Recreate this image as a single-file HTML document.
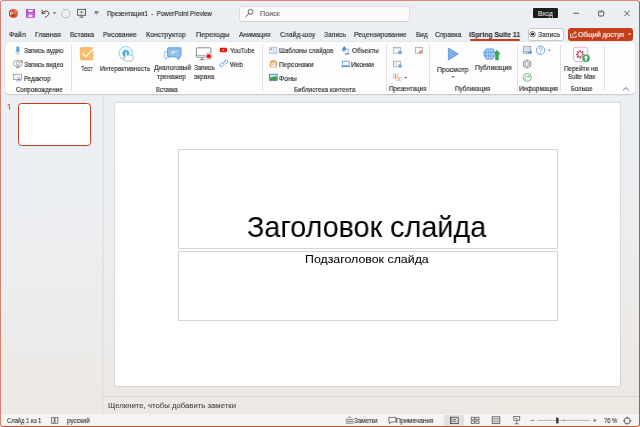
<!DOCTYPE html>
<html><head><meta charset="utf-8">
<style>
*{margin:0;padding:0;box-sizing:border-box}
html,body{width:640px;height:427px;overflow:hidden;background:#fff}
body{font-family:"Liberation Sans",sans-serif;color:#242424;position:relative}
.win{position:absolute;left:0;top:0;width:640px;height:427px;border-radius:3px;overflow:hidden;
 background:linear-gradient(175deg,#ebeef3 0%,#ebeef2 35%,#ecedee 60%,#ede8e3 90%,#eee7e2 100%)}
.abs{position:absolute}
svg{position:absolute;overflow:visible}
.t{position:absolute;white-space:pre;line-height:1;transform-origin:0 0;-webkit-text-stroke:0.12px currentColor;will-change:transform}
.ribbon{position:absolute;left:4.8px;top:41.9px;width:630px;height:51.8px;background:#fdfdfd;border-radius:4px;box-shadow:0 0.8px 1.2px rgba(0,0,0,.17)}
.sep{position:absolute;width:1px;background:#e0e0e0;top:45px;height:46px}
.slide{position:absolute;left:115px;top:103px;width:504.5px;height:283px;background:#fff;border-radius:1.5px;box-shadow:0 0 1.2px 0.6px rgba(0,0,0,.09)}
.ph{position:absolute;border:1px solid #d6d6d6}
</style></head><body>
<div class="win">
 <!-- title bar -->
 <div class="abs" style="left:239px;top:5.5px;width:171px;height:16px;background:#fafafa;border:1px solid #dedfe2;border-bottom-color:#cfd0d3;border-radius:3.5px"></div>
 <div class="abs" style="left:533px;top:8px;width:25px;height:10px;background:#1c1c1c;border-radius:1px"></div>

 <!-- Запись button -->
 <div class="abs" style="left:527.5px;top:27.5px;width:36px;height:13px;background:#fff;border:1px solid #c8c8c8;border-radius:3px"></div>
 <!-- share button -->
 <div class="abs" style="left:568px;top:27.5px;width:65px;height:13px;background:#c43e1c;border-radius:3px"></div>
 <div class="abs" style="left:470px;top:39px;width:50px;height:1.5px;background:#c43e1c;border-radius:1px"></div>

 <div class="ribbon"></div>
 <div class="sep" style="left:71px"></div>
 <div class="sep" style="left:262px"></div>
 <div class="sep" style="left:386px"></div>
 <div class="sep" style="left:429px"></div>
 <div class="sep" style="left:517px"></div>
 <div class="sep" style="left:559.5px"></div>
 <div class="sep" style="left:603.5px"></div>

 <!-- left panel -->
 <div class="abs" style="left:17.6px;top:102.9px;width:73.2px;height:42.9px;border:1.8px solid #be3f1d;border-radius:3.6px;background:#fff"></div>
 <div class="abs" style="left:101.5px;top:95px;width:2px;height:318px;background:#e2e3e5"></div>

 <div class="slide"></div>
 <div class="ph" style="left:177.5px;top:149px;width:380px;height:100px"></div>
 <div class="ph" style="left:177.5px;top:251px;width:380px;height:70px"></div>

 <div class="abs" style="left:103px;top:396px;width:536px;height:1px;background:#dcdad7"></div>

 <!-- status bar -->
 <div class="abs" style="left:0;top:413.5px;width:640px;height:14px;background:#f4f4f3"></div>
 <div class="abs" style="left:443.6px;top:415px;width:20.3px;height:10.6px;background:#e0e0e0;border-radius:1px"></div>


 <!-- ===== title bar icons ===== -->
 <svg style="left:0;top:0" width="640" height="427" viewBox="0 0 640 427">
  <!-- ppt logo -->
  <circle cx="13.5" cy="13.5" r="4.5" fill="#d5532f"/>
  <path d="M13.5 9 A4.5 4.5 0 0 1 18 13.5 L13.5 13.5Z" fill="#ed7a50"/>
  <rect x="9.3" y="10.8" width="4.6" height="5.4" rx="0.6" fill="#b7371a"/>
  <path d="M10.6 15.2 V12 H12.1 A1 1 0 0 1 12.1 14 H10.6" fill="none" stroke="#fff" stroke-width="0.8"/>
  <!-- save -->
  <rect x="26" y="9" width="9" height="8.8" rx="0.8" fill="#b54fc4"/>
  <rect x="28.2" y="9.8" width="4.5" height="2" fill="#fff"/>
  <rect x="28.6" y="14.6" width="3.8" height="2.3" fill="#fff"/>
  <path d="M27.2 13.3 H33.8 M27.2 14.1 V16.8 M33.8 14.1 V16.8" stroke="#dba8e3" stroke-width="0.5" fill="none"/>
  <!-- undo -->
  <path d="M42.2 10.4 L42 13.4 L45 13.2" fill="none" stroke="#424242" stroke-width="1" stroke-linejoin="round" stroke-linecap="round"/>
  <path d="M42.3 13.1 C44 10.2 48.8 10.2 48.8 13.4 C48.8 15 47.2 16.2 45.3 17.3" fill="none" stroke="#424242" stroke-width="1" stroke-linecap="round"/>
  <path d="M52.9 12.4 L54.5 14 L56.1 12.4Z" fill="#333"/>
  <!-- redo disabled -->
  <path d="M64.6 9.7 A4.2 4.2 0 1 1 62 11.9" fill="none" stroke="#b4b6b9" stroke-width="0.9"/>
  <path d="M62.6 8.9 L64.6 9.7 L63.4 11.4" fill="none" stroke="#b4b6b9" stroke-width="0.8"/>
  <!-- present -->
  <rect x="77.4" y="9.3" width="8.2" height="6" fill="#e6e6e6" stroke="#4a4a4a" stroke-width="0.8"/>
  <path d="M80.6 10.8 L83.2 12.3 L80.6 13.8Z" fill="#2f9e44"/>
  <path d="M81.5 15.3 V17 M79.4 17.2 H83.6" stroke="#4a4a4a" stroke-width="0.8"/>
  <!-- customize -->
  <path d="M94.6 11.6 H98.4" stroke="#444" stroke-width="0.7"/>
  <path d="M95 12.6 L96.5 14.4 L98 12.6Z" fill="none" stroke="#444" stroke-width="0.6" stroke-linejoin="round"/>
  <!-- search icon -->
  <circle cx="250.6" cy="11.8" r="2.5" fill="none" stroke="#444" stroke-width="0.8"/>
  <path d="M248.8 13.7 L246 16.6" stroke="#444" stroke-width="0.9" stroke-linecap="round"/>
  <!-- window controls -->
  <path d="M573.5 13.3 H579" stroke="#333" stroke-width="0.8"/>
  <rect x="598.6" y="11" width="5.2" height="5" rx="1" fill="none" stroke="#333" stroke-width="0.8"/>
  <path d="M599.8 12.3 H602.6" stroke="#333" stroke-width="0.5"/>
  <path d="M624.3 10.9 L629.5 16.1 M629.5 10.9 L624.3 16.1" stroke="#333" stroke-width="0.8"/>
  <!-- record button dot -->
  <circle cx="532.6" cy="34.2" r="2.7" fill="none" stroke="#242424" stroke-width="0.6"/>
  <circle cx="532.6" cy="34.2" r="1.4" fill="#242424"/>
  <!-- share icon -->
  <path d="M570.6 33.3 V37.3 H576.2 V35.3" fill="none" stroke="#fff" stroke-width="0.8"/>
  <path d="M572.6 35.8 C572.8 33.4 574 32.6 575.6 32.6 M574.6 31.2 L576 32.6 L574.6 34" fill="none" stroke="#fff" stroke-width="0.8"/>
  <path d="M627.9 33.4 L629.6 35.1 L631.3 33.4Z" fill="#fff"/>

  <!-- ===== ribbon: Сопровождение ===== -->
  <rect x="16.3" y="46.2" width="3" height="5.8" rx="1.5" fill="#5b9fe2"/>
  <path d="M15.6 50.8 A2.2 2.2 0 0 0 20 50.8 M17.8 53 V54.2 M16.6 54.3 H19" fill="none" stroke="#9a9a9a" stroke-width="0.5"/>
  <!-- webcam -->
  <rect x="13.6" y="60.6" width="8.6" height="5.6" rx="2.6" fill="none" stroke="#7a7a7a" stroke-width="0.7"/>
  <circle cx="17.9" cy="63.4" r="1.7" fill="none" stroke="#7a7a7a" stroke-width="0.6"/>
  <path d="M17.9 66.2 V67.2 M16 67.5 H19.8" stroke="#7a7a7a" stroke-width="0.7"/>
  <circle cx="21.6" cy="61.4" r="1" fill="#e8483f"/>
  <!-- editor -->
  <rect x="13.6" y="74.2" width="8" height="5.4" fill="#f6f6f6" stroke="#8a8a8a" stroke-width="0.7"/>
  <path d="M17.6 77.2 L19.6 80 M19.6 77.2 L17.6 80" stroke="#4a8ad4" stroke-width="0.6"/>
  <circle cx="17.3" cy="80.6" r="0.7" fill="none" stroke="#4a8ad4" stroke-width="0.5"/><circle cx="19.9" cy="80.6" r="0.7" fill="none" stroke="#4a8ad4" stroke-width="0.5"/>

  <!-- ===== Вставка ===== -->
  <rect x="80.3" y="47.6" width="12.6" height="12.3" rx="1.2" fill="#f9bd6c" stroke="#f2a64a" stroke-width="0.6"/>
  <path d="M82.8 53.6 L85.8 56.6 L93.6 48.8" fill="none" stroke="#fff" stroke-width="1.3" stroke-linecap="round" stroke-linejoin="round"/>
  <!-- interactivity -->
  <circle cx="125.8" cy="53.3" r="6.7" fill="#fff" stroke="#72cbe8" stroke-width="0.9"/>
  <circle cx="125.8" cy="53.3" r="4.4" fill="#bfe8f7"/>
  <circle cx="125.8" cy="53.3" r="3.1" fill="#34b2ea"/>
  <path d="M125 52.6 L125.2 58 L124 57.2 C123.4 57 123 57.6 123.4 58.2 L125.6 61 H131.6 L133.2 58.2 V56.6 C133.2 55.8 132.4 55.6 131.8 55.8 C131.6 55.2 130.8 55 130.2 55.4 C130 54.8 129.2 54.6 128.6 55 L127 55.2 V52.6 C127 51.6 125 51.6 125 52.6Z" fill="#fff" stroke="#8c8c8c" stroke-width="0.55"/>
  <!-- dialog -->
  <path d="M165.2 51.6 H169 V57.6 H167 L166 59.6 L165.6 57.6 H165.2 A0.8 0.8 0 0 1 164.4 56.8 V52.4 A0.8 0.8 0 0 1 165.2 51.6Z" fill="#f6faff" stroke="#7fb0e6" stroke-width="0.7" stroke-linejoin="round"/>
  <path d="M168.4 47.8 H180.2 A0.8 0.8 0 0 1 181 48.6 V56 A0.8 0.8 0 0 1 180.2 56.8 H179.6 L178.6 59.6 L176 56.8 H168.4 A0.8 0.8 0 0 1 167.6 56 V48.6 A0.8 0.8 0 0 1 168.4 47.8Z" fill="#92c0ec" stroke="#4a8fd8" stroke-width="0.8" stroke-linejoin="round"/>
  <path d="M171.2 51.8 H177 M171.2 53 H174.2" stroke="#e6f1fb" stroke-width="1"/>
  <!-- screen record -->
  <rect x="196.4" y="47.8" width="14.4" height="9.4" rx="0.8" fill="#fff" stroke="#707070" stroke-width="0.8"/>
  <path d="M196.4 55.4 H206" stroke="#707070" stroke-width="0.6"/>
  <path d="M202 57.4 V59.2 M199.8 59.6 H204.4" stroke="#707070" stroke-width="0.9"/>
  <circle cx="208.8" cy="56.2" r="3.6" fill="#fff" stroke="#8a8a8a" stroke-width="0.5"/>
  <circle cx="208.8" cy="56.2" r="2.3" fill="#e41b1b"/>
  <!-- youtube -->
  <rect x="219.8" y="47.8" width="7.2" height="4.4" rx="1.1" fill="#f40f0f"/>
  <path d="M222.8 49 L224.6 50 L222.8 51Z" fill="#fff"/>
  <!-- link -->
  <path d="M223.4 62.4 L225.4 60.4 A1.4 1.4 0 0 1 227.4 62.4 L225.4 64.4" fill="none" stroke="#4a8ad4" stroke-width="0.8"/>
  <path d="M224.2 64.2 L222.2 66.2 A1.4 1.4 0 0 1 220.2 64.2 L222.2 62.2" fill="none" stroke="#4a8ad4" stroke-width="0.8"/>
  <path d="M222.6 64 L225 61.6" stroke="#4a8ad4" stroke-width="0.8"/>

  <!-- ===== Библиотека ===== -->
  <rect x="269.4" y="47.2" width="7.6" height="6.4" fill="#f2f2f2" stroke="#b4b4b4" stroke-width="0.6"/>
  <rect x="273.4" y="47.8" width="3" height="5.2" fill="#e2eefc" stroke="#8cb8ec" stroke-width="0.5"/>
  <circle cx="271.3" cy="49.2" r="0.9" fill="#5a9ee6"/>
  <path d="M270.4 51 H272.2 M270.4 52.2 H272.2" stroke="#c4c4c4" stroke-width="0.5"/>
  <!-- face -->
  <path d="M269.6 64.6 C269.4 61.6 271 60 273.5 60 C276 60 277.6 61.6 277.4 64.6 C277.3 66.4 276.6 67.4 275.6 67.6 L271.4 67.6 C270.4 67.4 269.7 66.4 269.6 64.6Z" fill="#dcab6c"/>
  <ellipse cx="273.5" cy="64.6" rx="2.5" ry="2.9" fill="#f8e9e0"/>
  <path d="M271 63.2 C271.6 61.6 275.4 61.6 276 63.2 C274.6 62.6 272.4 62.6 271 63.2Z" fill="#dcab6c"/>
  <circle cx="272.5" cy="64.4" r="0.35" fill="#8a6a5a"/><circle cx="274.5" cy="64.4" r="0.35" fill="#8a6a5a"/>
  <!-- backgrounds -->
  <rect x="269.4" y="74.2" width="7.8" height="6.2" fill="#cfe4f6" stroke="#2f5f8a" stroke-width="0.7"/>
  <path d="M269.8 78 C271.5 76.4 273 77.6 274.4 76.6 C275.4 76 276.4 76.6 276.9 76.8 V80 H269.8Z" fill="#3f9e4f"/>
  <!-- lamp -->
  <path d="M341.6 50.6 L343.6 46.4 H345 L346.4 50.6Z" fill="#4a8ad4"/>
  <path d="M342.6 51 A1 1 0 0 0 344.6 51" fill="#f39a3c"/>
  <path d="M345.6 48.6 L349 49.6 L347.2 53.4" fill="none" stroke="#4a8ad4" stroke-width="0.6"/>
  <rect x="344.8" y="53.3" width="4.8" height="1.1" rx="0.4" fill="#4a8ad4"/>
  <!-- laptop -->
  <rect x="342.6" y="61.2" width="6.6" height="4.4" fill="none" stroke="#4a8ad4" stroke-width="0.7"/>
  <path d="M341.2 66.6 H350.2" stroke="#4a8ad4" stroke-width="0.9"/>

  <!-- ===== Презентация ===== -->
  <rect x="393.4" y="47.6" width="7.2" height="5.6" fill="#fafafa" stroke="#9c9c9c" stroke-width="0.7"/>
  <path d="M393.4 48.6 H400.4" stroke="#c8c8c8" stroke-width="0.5"/>
  <circle cx="400" cy="52.4" r="2.1" fill="#5a9ae0" stroke="#fff" stroke-width="0.4"/><path d="M400 51.7 V53.1" stroke="#fff" stroke-width="0.5"/>
  <rect x="415.4" y="47.6" width="7.2" height="5.6" fill="#fafafa" stroke="#9c9c9c" stroke-width="0.7"/>
  <circle cx="420.6" cy="52.2" r="2" fill="#f3a66a" stroke="#fff" stroke-width="0.4"/>
  <path d="M420.6 50.2 A2 2 0 0 1 422.6 52.2 H420.6Z" fill="#9a86d6"/>
  <path d="M420.6 52.2 V54.2 A2 2 0 0 1 418.6 52.2Z" fill="#ee86a6"/>
  <rect x="393.4" y="61.2" width="7.2" height="5.6" fill="#fafafa" stroke="#9c9c9c" stroke-width="0.7"/>
  <path d="M395 64.8 L396 63.4 L396.8 64.8" stroke="#999" stroke-width="0.5" fill="none"/>
  <circle cx="400" cy="66" r="2.1" fill="#6aa6e6" stroke="#fff" stroke-width="0.4"/>
  <rect x="393.2" y="74" width="4.8" height="4.2" fill="#fff" stroke="#8aa4c4" stroke-width="0.5"/>
  <path d="M395.6 74.6 V77.6" stroke="#4a8ad4" stroke-width="1"/>
  <rect x="396.4" y="77" width="5" height="3.4" rx="0.5" fill="#fff" stroke="#f2a868" stroke-width="0.6"/>
  <path d="M398.9 77.4 V80.2" stroke="#f08a40" stroke-width="1"/>
  <path d="M404.2 77 L405.7 78.6 L407.2 77Z" fill="#555"/>

  <!-- ===== Публикация ===== -->
  <path d="M448.4 48 V60 L458.2 54Z" fill="#7fb0e8" stroke="#4a8ad4" stroke-width="0.7" stroke-linejoin="round"/>
  <path d="M451.4 76.2 L453.1 77.8 L454.8 76.2Z" fill="#555"/>
  <circle cx="489.6" cy="54" r="6.2" fill="#68a6e6"/>
  <path d="M483.6 54 H495.6 M484.6 50.6 H494.6 M484.6 57.4 H494.6" stroke="#e4effa" stroke-width="0.5"/>
  <ellipse cx="489.6" cy="54" rx="2.6" ry="6.2" fill="none" stroke="#e4effa" stroke-width="0.5"/>
  <path d="M489.6 47.8 V60.2" stroke="#e4effa" stroke-width="0.4"/>
  <path d="M497 49.6 L501.2 54.4 H499 V60.4 H495 V54.4 H492.8Z" fill="#3fa35a" stroke="#fff" stroke-width="0.5"/>

  <!-- ===== Информация ===== -->
  <rect x="523.4" y="46.6" width="7.4" height="5.2" fill="#cfe2f6" stroke="#8a8a8a" stroke-width="0.6"/>
  <path d="M523 53 H528 M523.8 53.8 V53" stroke="#8a8a8a" stroke-width="0.8"/>
  <path d="M526.4 53.8 L531.6 50.6 V53.8Z" fill="#4a8ad4"/>
  <circle cx="540.6" cy="50.2" r="4.2" fill="none" stroke="#4a8ad4" stroke-width="0.8"/>
  <path d="M539.2 49.2 A1.4 1.4 0 1 1 541 50.4 L540.6 51.2 V51.6" fill="none" stroke="#4a8ad4" stroke-width="0.7"/>
  <circle cx="540.6" cy="52.8" r="0.4" fill="#4a8ad4"/>
  <path d="M547.9 49.7 L549.4 51.1 L550.9 49.7Z" fill="#555"/>
  <polygon points="527.10,68.20 523.46,66.10 523.46,61.90 527.10,59.80 530.74,61.90 530.74,66.10" fill="none" stroke="#6a6a6a" stroke-width="0.7"/>
  <polygon points="527.10,66.00 525.37,65.00 525.37,63.00 527.10,62.00 528.83,63.00 528.83,65.00" fill="none" stroke="#6a6a6a" stroke-width="0.6"/>
  <path d="M527.10 66.00 L527.10 68.20 M525.37 65.00 L523.46 66.10 M525.37 63.00 L523.46 61.90 M527.10 62.00 L527.10 59.80 M528.83 63.00 L530.74 61.90 M528.83 65.00 L530.74 66.10" stroke="#7a7a7a" stroke-width="0.5"/>
  <circle cx="527.3" cy="77.4" r="4" fill="none" stroke="#4fae64" stroke-width="0.8"/>
  <path d="M524.8 78.4 C525.8 76 528 75.6 529.8 76.6 M529.8 76.6 L528.6 75.4 M529.8 76.6 L528.4 77.4 M525 79 L526 80" fill="none" stroke="#4fae64" stroke-width="0.7"/>

  <!-- ===== Больше ===== -->
  <rect x="573.6" y="47.2" width="14.2" height="14.4" rx="2.6" fill="#fff" stroke="#e8a2bd" stroke-width="0.9"/>
  <g fill="#cc3a6e"><ellipse cx="580.20" cy="51.30" rx="0.85" ry="1.4" transform="rotate(0 580.20 51.30)"/><ellipse cx="582.39" cy="52.21" rx="0.85" ry="1.4" transform="rotate(45 582.39 52.21)"/><ellipse cx="583.30" cy="54.40" rx="0.85" ry="1.4" transform="rotate(90 583.30 54.40)"/><ellipse cx="582.39" cy="56.59" rx="0.85" ry="1.4" transform="rotate(135 582.39 56.59)"/><ellipse cx="580.20" cy="57.50" rx="0.85" ry="1.4" transform="rotate(180 580.20 57.50)"/><ellipse cx="578.01" cy="56.59" rx="0.85" ry="1.4" transform="rotate(225 578.01 56.59)"/><ellipse cx="577.10" cy="54.40" rx="0.85" ry="1.4" transform="rotate(270 577.10 54.40)"/><ellipse cx="578.01" cy="52.21" rx="0.85" ry="1.4" transform="rotate(315 578.01 52.21)"/></g>
  <circle cx="586" cy="58.2" r="4.1" fill="#45a862" stroke="#fff" stroke-width="0.6"/>
  <path d="M586 55.4 L588.3 57.8 H586.8 V60.6 H585.2 V57.8 H583.7Z" fill="#fff"/>
  <path d="M623 90.4 L625.9 87.6 L628.8 90.4" fill="none" stroke="#444" stroke-width="0.8"/>

  <path d="M9.4 104 V109.8 M7.6 105.4 L9.4 104" fill="none" stroke="#cf5c3c" stroke-width="1"/>
  <!-- ===== status bar ===== -->
  <path d="M51.6 417.6 H54.2 V423.4 H51.6Z M55 417.6 H58.2 L57.6 423.4 H55Z" fill="none" stroke="#444" stroke-width="0.7"/>
  <path d="M345.6 419.6 H353.6 M345.6 421.4 H353.6 M345.6 423.2 H353.6" stroke="#555" stroke-width="0.7"/>
  <path d="M347.6 418.2 L349.6 416.6 L351.6 418.2" fill="none" stroke="#555" stroke-width="0.7"/>
  <path d="M388.8 417.4 H395.8 V422 H391.2 L389.6 423.8 V422 H388.8Z" fill="none" stroke="#444" stroke-width="0.7" stroke-linejoin="round"/>
  <rect x="450.4" y="417.2" width="7.8" height="6.4" fill="none" stroke="#444" stroke-width="0.8"/>
  <path d="M452.4 419.4 H456.2 M452.4 421.4 H456.2" stroke="#444" stroke-width="0.7"/>
  <path d="M451.4 417.4 V423.4" stroke="#444" stroke-width="0.5"/>
  <rect x="471.2" y="417.2" width="3.2" height="2.6" fill="none" stroke="#444" stroke-width="0.7"/>
  <rect x="475.8" y="417.2" width="3.2" height="2.6" fill="none" stroke="#444" stroke-width="0.7"/>
  <rect x="471.2" y="421" width="3.2" height="2.6" fill="none" stroke="#444" stroke-width="0.7"/>
  <rect x="475.8" y="421" width="3.2" height="2.6" fill="none" stroke="#444" stroke-width="0.7"/>
  <path d="M492.2 416.8 C493.6 416.4 495.2 416.6 496 417.2 C496.8 416.6 498.4 416.4 499.8 416.8 V423.6 C498.4 423.2 496.8 423.4 496 424 C495.2 423.4 493.6 423.2 492.2 423.6Z" fill="#e8e8e8" stroke="#444" stroke-width="0.8"/>
  <path d="M496 417.2 V424 M493.2 418.6 H495 M493.2 420.2 H495 M493.2 421.8 H495 M497 418.6 H498.8 M497 420.2 H498.8 M497 421.8 H498.8" stroke="#555" stroke-width="0.5"/>
  <path d="M513.2 416.6 H520.2 M513.8 416.6 V420.4 H519.6 V416.6 M516.7 420.4 V423.6 M514.6 423.8 H518.8" fill="none" stroke="#444" stroke-width="0.7"/>
  <path d="M515.8 417.8 L517.6 418.7 L515.8 419.6Z" fill="#444"/>
  <path d="M530.8 420.4 H534.4" stroke="#555" stroke-width="0.7"/>
  <path d="M537.6 420.4 H590" stroke="#8a8a8a" stroke-width="0.6"/>
  <rect x="556" y="417.6" width="2.6" height="5.8" fill="#444"/>
  <path d="M564.2 419.4 V421.4" stroke="#555" stroke-width="0.5"/>
  <path d="M592.9 420.4 H596.5 M594.7 418.6 V422.2" stroke="#555" stroke-width="0.7"/>
  <rect x="624.6" y="418.2" width="5.2" height="5.2" rx="1.2" fill="none" stroke="#444" stroke-width="0.8"/>
  <path d="M627.2 416.6 V418.2 M627.2 423.4 V424.8 M623 420.8 H624.6 M629.8 420.8 H631.4" stroke="#444" stroke-width="0.9"/>
 </svg>

<div class="t" style="left:106.61px;top:10.07px;font-size:7.0px;color:#242424;transform:scaleX(0.883);">Презентация1  -  PowerPoint Preview</div>
<div class="t" style="left:259.64px;top:10.01px;font-size:7.2px;color:#5f5f5f;transform:scaleX(0.979);">Поиск</div>
<div class="t" style="left:538.47px;top:10.07px;font-size:7.0px;color:#ffffff;transform:scaleX(0.950);-webkit-text-stroke:0;">Вход</div>
<div class="t" style="left:8.62px;top:30.62px;font-size:7.3px;color:#242424;transform:scaleX(0.939);">Файл</div>
<div class="t" style="left:35.45px;top:30.62px;font-size:7.3px;color:#242424;transform:scaleX(0.936);">Главная</div>
<div class="t" style="left:70.38px;top:30.62px;font-size:7.3px;color:#242424;transform:scaleX(0.886);">Вставка</div>
<div class="t" style="left:103.27px;top:30.62px;font-size:7.3px;color:#242424;transform:scaleX(0.915);">Рисование</div>
<div class="t" style="left:146.44px;top:30.62px;font-size:7.3px;color:#242424;transform:scaleX(0.957);">Конструктор</div>
<div class="t" style="left:196.03px;top:30.62px;font-size:7.3px;color:#242424;transform:scaleX(0.978);">Переходы</div>
<div class="t" style="left:239.20px;top:30.62px;font-size:7.3px;color:#242424;transform:scaleX(0.920);">Анимация</div>
<div class="t" style="left:279.86px;top:30.62px;font-size:7.3px;color:#242424;transform:scaleX(0.928);">Слайд-шоу</div>
<div class="t" style="left:323.67px;top:30.62px;font-size:7.3px;color:#242424;transform:scaleX(0.910);">Запись</div>
<div class="t" style="left:354.05px;top:30.62px;font-size:7.3px;color:#242424;transform:scaleX(0.934);">Рецензирование</div>
<div class="t" style="left:415.79px;top:30.62px;font-size:7.3px;color:#242424;transform:scaleX(0.873);">Вид</div>
<div class="t" style="left:435.46px;top:30.62px;font-size:7.3px;color:#242424;transform:scaleX(0.924);">Справка</div>
<div class="t" style="left:469.32px;top:30.62px;font-size:7.3px;color:#242424;font-weight:bold;transform:scaleX(0.934);-webkit-text-stroke:0.05px #242424;">iSpring Suite 11</div>
<div class="t" style="left:537.96px;top:31.02px;font-size:7.3px;color:#242424;transform:scaleX(0.923);">Запись</div>
<div class="t" style="left:578.39px;top:31.02px;font-size:7.3px;color:#ffffff;transform:scaleX(0.940);-webkit-text-stroke:0.15px #fff;">Общий доступ</div>
<div class="t" style="left:23.78px;top:47.37px;font-size:7.0px;color:#242424;transform:scaleX(0.897);">Запись аудио</div>
<div class="t" style="left:23.78px;top:60.97px;font-size:7.0px;color:#242424;transform:scaleX(0.886);">Запись видео</div>
<div class="t" style="left:23.50px;top:74.57px;font-size:7.0px;color:#242424;transform:scaleX(0.884);">Редактор</div>
<div class="t" style="left:16.09px;top:85.57px;font-size:7.0px;color:#242424;transform:scaleX(0.893);">Сопровождение</div>
<div class="t" style="left:81.09px;top:64.67px;font-size:7.0px;color:#242424;transform:scaleX(0.809);">Тест</div>
<div class="t" style="left:100.10px;top:64.67px;font-size:7.0px;color:#242424;transform:scaleX(0.897);">Интерактивность</div>
<div class="t" style="left:153.72px;top:64.37px;font-size:7.0px;color:#242424;transform:scaleX(0.937);">Диалоговый</div>
<div class="t" style="left:157.40px;top:73.27px;font-size:7.0px;color:#242424;transform:scaleX(0.924);">тренажер</div>
<div class="t" style="left:156.13px;top:85.77px;font-size:7.0px;color:#242424;transform:scaleX(0.833);">Вставка</div>
<div class="t" style="left:194.28px;top:64.37px;font-size:7.0px;color:#242424;transform:scaleX(0.900);">Запись</div>
<div class="t" style="left:194.34px;top:73.27px;font-size:7.0px;color:#242424;transform:scaleX(0.919);">экрана</div>
<div class="t" style="left:229.54px;top:47.17px;font-size:7.0px;color:#242424;transform:scaleX(0.903);">YouTube</div>
<div class="t" style="left:229.67px;top:60.67px;font-size:7.0px;color:#242424;transform:scaleX(0.905);">Web</div>
<div class="t" style="left:279.19px;top:47.47px;font-size:7.0px;color:#242424;transform:scaleX(0.904);">Шаблоны слайдов</div>
<div class="t" style="left:279.17px;top:60.67px;font-size:7.0px;color:#242424;transform:scaleX(0.944);">Персонажи</div>
<div class="t" style="left:279.32px;top:74.87px;font-size:7.0px;color:#242424;transform:scaleX(0.979);">Фоны</div>
<div class="t" style="left:351.61px;top:47.47px;font-size:7.0px;color:#242424;transform:scaleX(0.926);">Объекты</div>
<div class="t" style="left:351.34px;top:60.67px;font-size:7.0px;color:#242424;transform:scaleX(1.001);">Иконки</div>
<div class="t" style="left:294.10px;top:85.77px;font-size:7.0px;color:#242424;transform:scaleX(0.892);">Библиотека контента</div>
<div class="t" style="left:389.30px;top:85.07px;font-size:7.0px;color:#242424;transform:scaleX(0.887);">Презентация</div>
<div class="t" style="left:437.45px;top:65.77px;font-size:7.0px;color:#242424;transform:scaleX(0.983);">Просмотр</div>
<div class="t" style="left:474.68px;top:64.27px;font-size:7.0px;color:#242424;transform:scaleX(0.937);">Публикация</div>
<div class="t" style="left:455.00px;top:85.07px;font-size:7.0px;color:#242424;transform:scaleX(0.901);">Публикация</div>
<div class="t" style="left:518.59px;top:85.07px;font-size:7.0px;color:#242424;transform:scaleX(0.911);">Информация</div>
<div class="t" style="left:564.39px;top:64.77px;font-size:7.0px;color:#242424;transform:scaleX(0.908);">Перейти на</div>
<div class="t" style="left:567.62px;top:73.27px;font-size:7.0px;color:#242424;transform:scaleX(0.882);">Suite Max</div>
<div class="t" style="left:570.93px;top:85.07px;font-size:7.0px;color:#242424;transform:scaleX(0.847);">Больше</div>
<div class="t" style="left:107.68px;top:402.12px;font-size:7.3px;color:#505050;transform:scaleX(1.062);">Щелкните, чтобы добавить заметки</div>
<div class="t" style="left:6.81px;top:417.07px;font-size:7.0px;color:#242424;transform:scaleX(0.823);-webkit-text-stroke:0.06px currentColor;">Слайд 1 из 1</div>
<div class="t" style="left:67.49px;top:417.07px;font-size:7.0px;color:#242424;transform:scaleX(0.901);-webkit-text-stroke:0.06px currentColor;">русский</div>
<div class="t" style="left:354.48px;top:417.37px;font-size:7.0px;color:#242424;transform:scaleX(0.887);-webkit-text-stroke:0.06px currentColor;">Заметки</div>
<div class="t" style="left:396.38px;top:417.37px;font-size:7.0px;color:#242424;transform:scaleX(0.930);-webkit-text-stroke:0.06px currentColor;">Примечания</div>
<div class="t" style="left:603.71px;top:417.17px;font-size:7.0px;color:#242424;transform:scaleX(0.820);-webkit-text-stroke:0.06px currentColor;">76 %</div>
<div class="t" style="left:246.99px;top:212.45px;font-size:30.3px;color:#000000;transform:scaleX(0.949);-webkit-text-stroke:0;">Заголовок слайда</div>
<div class="t" style="left:304.71px;top:253.71px;font-size:11.8px;color:#000000;transform:scaleX(1.048);-webkit-text-stroke:0.05px #000;">Подзаголовок слайда</div>
</div>
<div class="abs" style="left:0;top:0;width:640px;height:427px;border:1px solid;border-color:#d98a78 #c85434 #c85434 #d3806f;border-radius:3px"></div>
</body></html>
